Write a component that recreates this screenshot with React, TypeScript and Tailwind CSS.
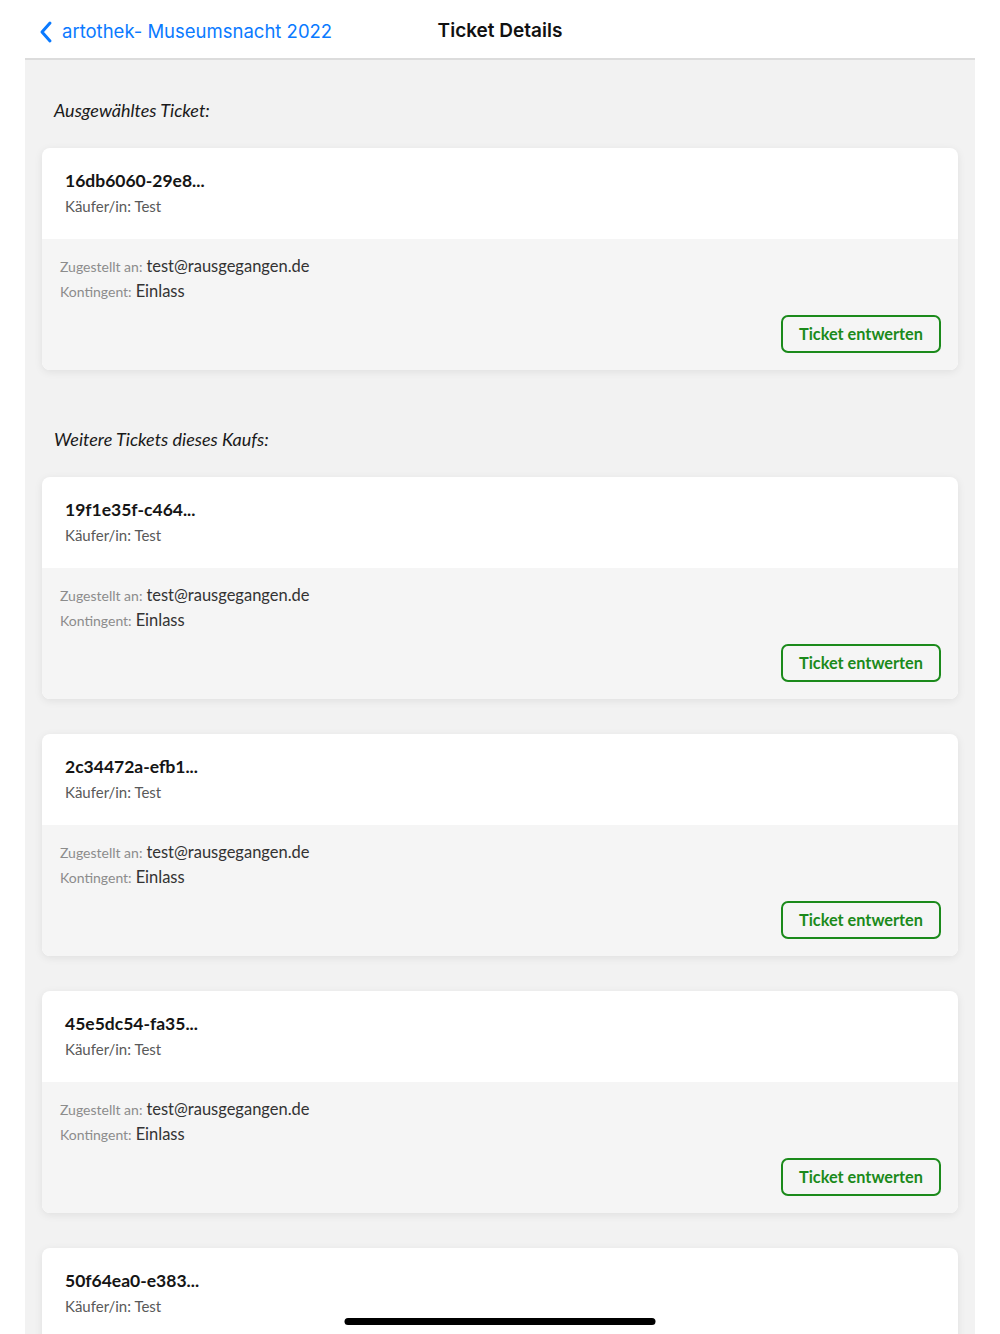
import React from "react";

type Ticket = {
  id: string;
  buyer: string;
  email: string;
  quota: string;
};

const selected: Ticket = {
  id: "16db6060-29e8...",
  buyer: "Test",
  email: "test@rausgegangen.de",
  quota: "Einlass",
};

const others: Ticket[] = [
  { id: "19f1e35f-c464...", buyer: "Test", email: "test@rausgegangen.de", quota: "Einlass" },
  { id: "2c34472a-efb1...", buyer: "Test", email: "test@rausgegangen.de", quota: "Einlass" },
  { id: "45e5dc54-fa35...", buyer: "Test", email: "test@rausgegangen.de", quota: "Einlass" },
  { id: "50f64ea0-e383...", buyer: "Test", email: "test@rausgegangen.de", quota: "Einlass" },
];

function TicketCard({ ticket }: { ticket: Ticket }) {
  return (
    <div className="rounded-[8px] overflow-hidden bg-white shadow-[0_2px_8px_rgba(0,0,0,0.08)]">
      <div className="h-[91px] px-[23px] pt-[22px]">
        <div className="text-[17.5px] leading-[22px] font-bold text-[#151515]">
          {ticket.id}
        </div>
        <div className="mt-[4px] text-[15px] leading-[20px] text-[#595959]">
          Käufer/in: {ticket.buyer}
        </div>
      </div>
      <div className="h-[131px] bg-[#f5f5f5] pl-[18px] pr-[17px] pt-[15px]">
        <div className="flex items-baseline h-[25px] gap-[4px]">
          <span className="text-[14px] text-[#8c8c8c]">Zugestellt an:</span>
          <span className="text-[16.5px] text-[#333]">{ticket.email}</span>
        </div>
        <div className="flex items-baseline h-[25px] gap-[4px]">
          <span className="text-[14px] text-[#8c8c8c]">Kontingent:</span>
          <span className="text-[16.5px] text-[#333]">{ticket.quota}</span>
        </div>
        <div className="mt-[11px] flex justify-end">
          <button className="w-[160px] h-[38px] rounded-[7px] border-[2.5px] border-[#1b8a1b] text-[#1b8a1b] text-[16.3px] font-bold bg-transparent">
            Ticket entwerten
          </button>
        </div>
      </div>
    </div>
  );
}

export default function App() {
  return (
    <div
      className="relative h-[1334px] overflow-hidden bg-white"
      style={{ fontFamily: "Lato, 'Noto Sans', sans-serif" }}
    >
      <div className="mx-[25px]">
        {/* nav bar */}
        <div className="relative h-[60px] flex items-center pt-[5px] px-[13px] border-b-2 border-[#dcdcdc] font-['Inter',sans-serif]">
          <div className="flex items-center gap-[8px] text-[#0a7aff] text-[18.5px]">
            <svg width="16" height="24" viewBox="0 0 16 24" fill="none">
              <path
                d="M12 3 L4 12 L12 21"
                stroke="#0a7aff"
                strokeWidth="3"
                strokeLinecap="round"
                strokeLinejoin="round"
              />
            </svg>
            <span>artothek- Museumsnacht 2022</span>
          </div>
          <div className="absolute left-1/2 top-[5px] bottom-0 flex items-center -translate-x-1/2 text-[19px] font-semibold text-[#111]">
            Ticket Details
          </div>
        </div>

        {/* content */}
        <div className="bg-[#f2f2f2] px-[17px] pt-[38px] pb-[40px]">
          <div className="pl-[12px] text-[18px] leading-[24px] italic text-[#1a1a1a]">
            Ausgewähltes Ticket:
          </div>
          <div className="mt-[26px]">
            <TicketCard ticket={selected} />
          </div>

          <div className="mt-[57px] pl-[12px] text-[18px] leading-[24px] italic text-[#1a1a1a]">
            Weitere Tickets dieses Kaufs:
          </div>
          <div className="mt-[26px] flex flex-col gap-[35px]">
            {others.map((t) => (
              <TicketCard key={t.id} ticket={t} />
            ))}
          </div>
        </div>
      </div>

      {/* home indicator */}
      <div className="absolute bottom-[9px] left-1/2 -translate-x-1/2 w-[311px] h-[7px] rounded-full bg-black" />
    </div>
  );
}
